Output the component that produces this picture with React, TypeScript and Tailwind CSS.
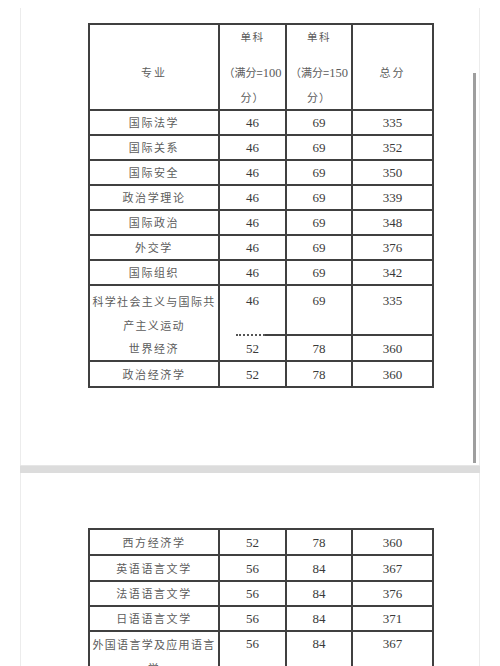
import React from "react";

const CN = { fontFamily: '"Noto Sans CJK SC", "Noto Sans", sans-serif' };
const NUM = { fontFamily: '"Liberation Serif", "DejaVu Serif", serif' };

const W = ["w-[130px]", "w-[67px]", "w-[66px]", "w-[81px]"];

function Row({ cells, h = "h-[25px]" }: { cells: string[]; h?: string }) {
  return (
    <div className={`flex ${h}`}>
      {cells.map((c, i) => (
        <div
          key={i}
          className={`${W[i]} shrink-0 border-r-2 border-b-2 border-[#404040] flex items-center justify-center`}
        >
          {i === 0 ? (
            <span style={CN} className="text-[11px] tracking-[1.6px] text-[#5c5c5c] leading-none">
              {c}
            </span>
          ) : (
            <span style={NUM} className="text-[13px] text-[#3a3a3a] leading-none">
              {c}
            </span>
          )}
        </div>
      ))}
    </div>
  );
}

function TallRow({
  lines,
  nums,
  dotted = false,
  pt = "pt-[3px]",
}: {
  lines: string[];
  nums: string[];
  dotted?: boolean;
  pt?: string;
}) {
  return (
    <div className="flex h-[50px]">
      <div
        className={`${W[0]} shrink-0 border-r-2 border-[#404040] ${dotted ? "" : "border-b-2"} ${pt} flex flex-col items-center`}
      >
        {lines.map((l, i) => (
          <div key={i} style={CN} className="text-[11px] tracking-[1.3px] text-[#5c5c5c] leading-[24px] whitespace-nowrap">
            {l}
          </div>
        ))}
      </div>
      {nums.map((n, i) => (
        <div
          key={i}
          className={`${W[i + 1]} shrink-0 border-r-2 border-[#404040] ${dotted && i === 0 ? "" : "border-b-2"} flex flex-col`}
        >
          <div style={NUM} className={`text-[13px] text-[#3a3a3a] leading-[24px] ${pt} text-center flex-1`}>
            {n}
          </div>
          {dotted && i === 0 && (
            <div className="flex h-[2px]">
              <div className="w-[16px]" />
              <div className="w-[29px] border-t-2 border-dotted border-[#555]" />
              <div className="flex-1 bg-[#404040]" />
            </div>
          )}
        </div>
      ))}
    </div>
  );
}

function Header() {
  return (
    <div className="flex h-[86px]">
      <div className={`${W[0]} shrink-0 border-r-2 border-b-2 border-[#404040] pt-[35px] text-center`}>
        <div style={CN} className="text-[11px] tracking-[2px] text-[#5c5c5c] leading-[24px]">专业</div>
      </div>
      {["100", "150"].map((v, i) => (
        <div key={v} className={`${W[i + 1]} shrink-0 border-r-2 border-b-2 border-[#404040] text-center`}>
          <div style={CN} className="text-[10.5px] tracking-[1.5px] text-[#5c5c5c] leading-[24px]">单科</div>
          <div style={CN} className="mt-[11px] text-[11px] text-[#5c5c5c] leading-[24px] whitespace-nowrap">
            （满分=<span style={NUM} className="text-[12.5px]">{v}</span>
          </div>
          <div style={CN} className="text-[11px] tracking-[1px] text-[#5c5c5c] leading-[24px]">分）</div>
        </div>
      ))}
      <div className={`${W[3]} shrink-0 border-r-2 border-b-2 border-[#404040] pt-[35px] text-center`}>
        <div style={CN} className="text-[11px] tracking-[2px] text-[#5c5c5c] leading-[24px]">总分</div>
      </div>
    </div>
  );
}

const rows1: string[][] = [
  ["国际法学", "46", "69", "335"],
  ["国际关系", "46", "69", "352"],
  ["国际安全", "46", "69", "350"],
  ["政治学理论", "46", "69", "339"],
  ["国际政治", "46", "69", "348"],
  ["外交学", "46", "69", "376"],
  ["国际组织", "46", "69", "342"],
];

const rows1b: string[][] = [
  ["世界经济", "52", "78", "360"],
  ["政治经济学", "52", "78", "360"],
];

const rows2: { c: string[]; h: string }[] = [
  { c: ["西方经济学", "52", "78", "360"], h: "h-[26px]" },
  { c: ["英语语言文学", "56", "84", "367"], h: "h-[26px]" },
  { c: ["法语语言文学", "56", "84", "376"], h: "h-[25px]" },
  { c: ["日语语言文学", "56", "84", "371"], h: "h-[25px]" },
];

export default function App() {
  return (
    <div className="relative w-[500px] h-[666px] overflow-hidden bg-white">
      <div className="px-[20px] pt-[8px]">
        <div className="h-[457px] border-x border-[#ececec] pt-[15px] pl-[67px]">
          <div className="w-[346px] border-l-2 border-t-2 border-[#404040]">
            <Header />
            {rows1.map((r, i) => (
              <Row key={i} cells={r} />
            ))}
            <TallRow lines={["科学社会主义与国际共", "产主义运动"]} nums={["46", "69", "335"]} dotted />
            {rows1b.map((r, i) => (
              <Row key={i} cells={r} h="h-[26px]" />
            ))}
          </div>
        </div>
        <div className="h-[8px] bg-[#dcdcdc] border-t border-[#e6e6e6]" />
        <div className="h-[300px] border-x border-[#ececec] pt-[55px] pl-[67px]">
          <div className="w-[346px] border-l-2 border-t-2 border-[#404040]">
            {rows2.map((r, i) => (
              <Row key={i} cells={r.c} h={r.h} />
            ))}
            <TallRow lines={["外国语言学及应用语言", "学"]} nums={["56", "84", "367"]} pt="pt-[0px]" />
          </div>
        </div>
      </div>
      <div className="absolute left-[473px] top-[73px] w-[3px] h-[390px] bg-[#9e9e9e]" />
    </div>
  );
}
